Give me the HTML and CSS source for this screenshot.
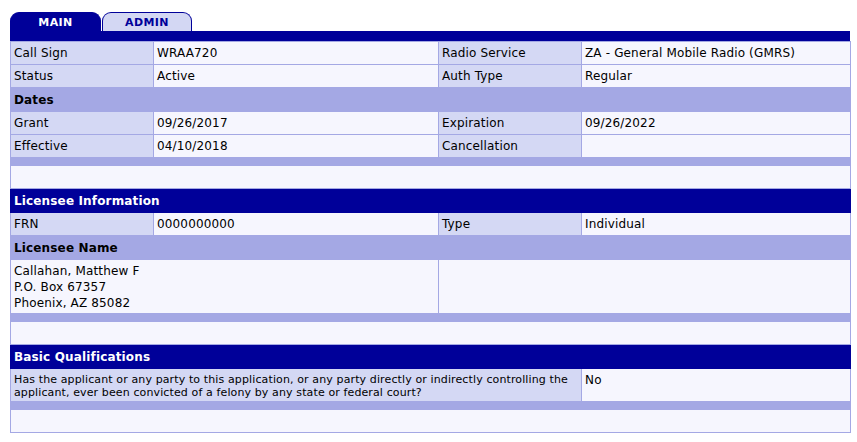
FILE: index.html
```html
<!DOCTYPE html>
<html>
<head>
<meta charset="utf-8">
<link rel="stylesheet" href="styles.css">
</head>
<body>
<div class="page">
  <div class="tabs">
    <div class="tab active">MAIN</div>
    <div class="tab">ADMIN</div>
  </div>
  <div class="tabbar"></div>
  <table class="lic">
    <colgroup>
      <col class="c1"><col class="c2"><col class="c3"><col class="c4">
    </colgroup>
    <tr><td class="lbl">Call Sign</td><td class="val">WRAA720</td><td class="lbl">Radio Service</td><td class="val">ZA - General Mobile Radio (GMRS)</td></tr>
    <tr><td class="lbl">Status</td><td class="val">Active</td><td class="lbl">Auth Type</td><td class="val">Regular</td></tr>
    <tr><td class="sub" colspan="4">Dates</td></tr>
    <tr><td class="lbl">Grant</td><td class="val">09/26/2017</td><td class="lbl">Expiration</td><td class="val">09/26/2022</td></tr>
    <tr><td class="lbl">Effective</td><td class="val">04/10/2018</td><td class="lbl">Cancellation</td><td class="val"></td></tr>
    <tr><td class="gap" colspan="4"></td></tr>
    <tr><td class="blank" colspan="4"></td></tr>
    <tr><td class="sect" colspan="4">Licensee Information</td></tr>
    <tr><td class="lbl">FRN</td><td class="val">0000000000</td><td class="lbl">Type</td><td class="val">Individual</td></tr>
    <tr><td class="sub" colspan="4">Licensee Name</td></tr>
    <tr><td class="val addr" colspan="2">Callahan, Matthew F<br>P.O. Box 67357<br>Phoenix, AZ 85082</td><td class="val" colspan="2"></td></tr>
    <tr><td class="gap" colspan="4"></td></tr>
    <tr><td class="blank" colspan="4"></td></tr>
    <tr><td class="sect" colspan="4">Basic Qualifications</td></tr>
    <tr><td class="lbl q" colspan="3">Has the applicant or any party to this application, or any party directly or indirectly controlling the applicant, ever been convicted of a felony by any state or federal court?</td><td class="val">No</td></tr>
    <tr><td class="gap" colspan="4"></td></tr>
    <tr><td class="blank" colspan="4"></td></tr>
  </table>
</div>
</body>
</html>
```
FILE: styles.css
```css
html, body {
  margin: 0;
  padding: 0;
  background: #ffffff;
}
body {
  font-family: "DejaVu Sans", Verdana, sans-serif;
  font-size: 12px;
  letter-spacing: 0.15px;
  color: #000000;
}
.page {
  padding: 12px 7px 0 10px;
}
.tabs {
  display: flex;
  gap: 1px;
  height: 19px;
}
.tab {
  width: 88px;
  height: 18px;
  border: 1px solid #000099;
  border-bottom: none;
  border-radius: 9px 9px 0 0;
  background: #d3d7f3;
  color: #000099;
  font-weight: bold;
  font-size: 11px;
  letter-spacing: 0.4px;
  line-height: 19px;
  text-align: center;
}
.tab.active {
  background: #000099;
  color: #ffffff;
  width: 89px;
}
.tabbar {
  height: 10px;
  background: #000099;
}
.lic {
  width: 840px;
  border-collapse: collapse;
  table-layout: fixed;
}
.c1 { width: 143px; }
.c2 { width: 285px; }
.c3 { width: 143px; }
.c4 { width: 269px; }
.lic td {
  border: 1px solid #a4a8e4;
  padding: 3px 3px;
  height: 16px;
  line-height: 16px;
  vertical-align: top;
}
.lbl { background: #d4d8f4; }
.val { background: #f6f6fe; }
.lic td.sub {
  background: #a4a8e4;
  font-weight: bold;
  padding: 4px 3px 3px;
}
.lic td.sect {
  background: #000099;
  color: #ffffff;
  font-weight: bold;
  border-color: #000099;
  padding: 4px 3px 3px;
}
.lic td.gap {
  background: #a4a8e4;
  height: 7px;
  padding: 0;
  line-height: 0;
}
.lic td.blank {
  background: #f6f6fe;
  height: 16px;
}
.lic td.addr {
  line-height: 16px;
  padding: 3px 3px 2px;
}
.lic td.q {
  font-size: 11px;
  letter-spacing: 0.12px;
  line-height: 13px;
  padding: 4px 3px 2px;
}
```
